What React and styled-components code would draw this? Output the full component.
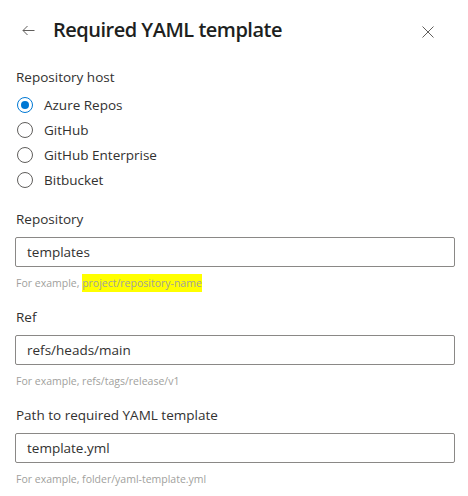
import React from "react";
import styled, { createGlobalStyle } from "styled-components";

const Global = createGlobalStyle`
  html, body { margin: 0; padding: 0; background: #fff; }
  body { font-family: "Open Sans", "Noto Sans", sans-serif; color: #323130; }
`;

const Panel = styled.div`
  width: 468px;
  height: 496px;
  box-sizing: border-box;
  padding: 16px 13px 0 15px;
  display: flex;
  flex-direction: column;
  overflow: hidden;
`;

const Header = styled.div`
  display: flex;
  align-items: center;
  height: 28px;
  margin-bottom: 23px;
`;

const IconButton = styled.button`
  border: 0;
  background: transparent;
  padding: 0;
  width: ${(p) => p.$w}px;
  height: 28px;
  display: flex;
  align-items: center;
  justify-content: ${(p) => p.$justify || "center"};
  color: #605e5c;
  cursor: pointer;
`;

const BackButton = styled(IconButton)`
  padding-left: 7px;
`;

const CloseButton = styled(IconButton)`
  margin-right: 21px;
  margin-top: 4px;
`;

const Title = styled.h1`
  margin: 0;
  flex: 1;
  font-size: 20px;
  font-weight: 600;
  line-height: 28px;
  color: #201f1e;
  letter-spacing: -0.5px;
`;

const Label = styled.div`
  font-size: 13.5px;
  line-height: 20px;
  color: #323130;
  padding-left: 1px;
`;

const RadioGroup = styled.div`
  display: flex;
  flex-direction: column;
  margin-top: 5px;
  margin-bottom: 17px;
`;

const RadioRow = styled.label`
  display: flex;
  align-items: center;
  height: 25px;
  gap: 11px;
  font-size: 13.5px;
  color: #323130;
`;

const RadioCircle = styled.span`
  width: 16px;
  height: 16px;
  box-sizing: border-box;
  margin-left: 2px;
  border-radius: 50%;
  border: 1px solid ${(p) => (p.$checked ? "#0078d4" : "#605e5c")};
  display: flex;
  align-items: center;
  justify-content: center;
  &::after {
    content: "";
    width: 8px;
    height: 8px;
    border-radius: 50%;
    background: #0078d4;
    display: ${(p) => (p.$checked ? "block" : "none")};
  }
`;

const Field = styled.div`
  display: flex;
  flex-direction: column;
  margin-bottom: 16px;
`;

const Input = styled.div`
  margin-top: 8px;
  height: 30px;
  width: 440px;
  box-sizing: border-box;
  border: 1px solid #8a8886;
  border-radius: 2px;
  padding: 0 11px;
  display: flex;
  align-items: center;
  font-size: 13.5px;
  color: #323130;
`;

const Help = styled.div`
  margin-top: 8px;
  font-size: 10.5px;
  line-height: 16px;
  color: #a19f9d;
  padding-left: 1px;
`;

const Mark = styled.span`
  background: #ffff00;
  color: #a19f9d;
  padding: 2px 0;
`;

const ArrowIcon = () => (
  <svg width="13" height="11" viewBox="0 0 13 11" fill="none" stroke="#605e5c" strokeWidth="1">
    <path d="M12.5 5.5H1M5.5 1L1 5.5L5.5 10" />
  </svg>
);

const CloseIcon = () => (
  <svg width="12" height="12" viewBox="0 0 12 12" fill="none" stroke="#605e5c" strokeWidth="1">
    <path d="M0.5 0.5L11.5 11.5M11.5 0.5L0.5 11.5" />
  </svg>
);

const hosts = ["Azure Repos", "GitHub", "GitHub Enterprise", "Bitbucket"];

export default function App() {
  return (
    <>
      <Global />
      <Panel>
        <Header>
          <BackButton $w={38} $justify="flex-start">
            <ArrowIcon />
          </BackButton>
          <Title>Required YAML template</Title>
          <CloseButton $w={12}>
            <CloseIcon />
          </CloseButton>
        </Header>

        <Label>Repository host</Label>
        <RadioGroup>
          {hosts.map((h, i) => (
            <RadioRow key={h}>
              <RadioCircle $checked={i === 0} />
              {h}
            </RadioRow>
          ))}
        </RadioGroup>

        <Field>
          <Label>Repository</Label>
          <Input>templates</Input>
          <Help>
            For example, <Mark>project/repository-name</Mark>
          </Help>
        </Field>

        <Field>
          <Label>Ref</Label>
          <Input>refs/heads/main</Input>
          <Help>For example, refs/tags/release/v1</Help>
        </Field>

        <Field>
          <Label>Path to required YAML template</Label>
          <Input>template.yml</Input>
          <Help>For example, folder/yaml-template.yml</Help>
        </Field>
      </Panel>
    </>
  );
}
